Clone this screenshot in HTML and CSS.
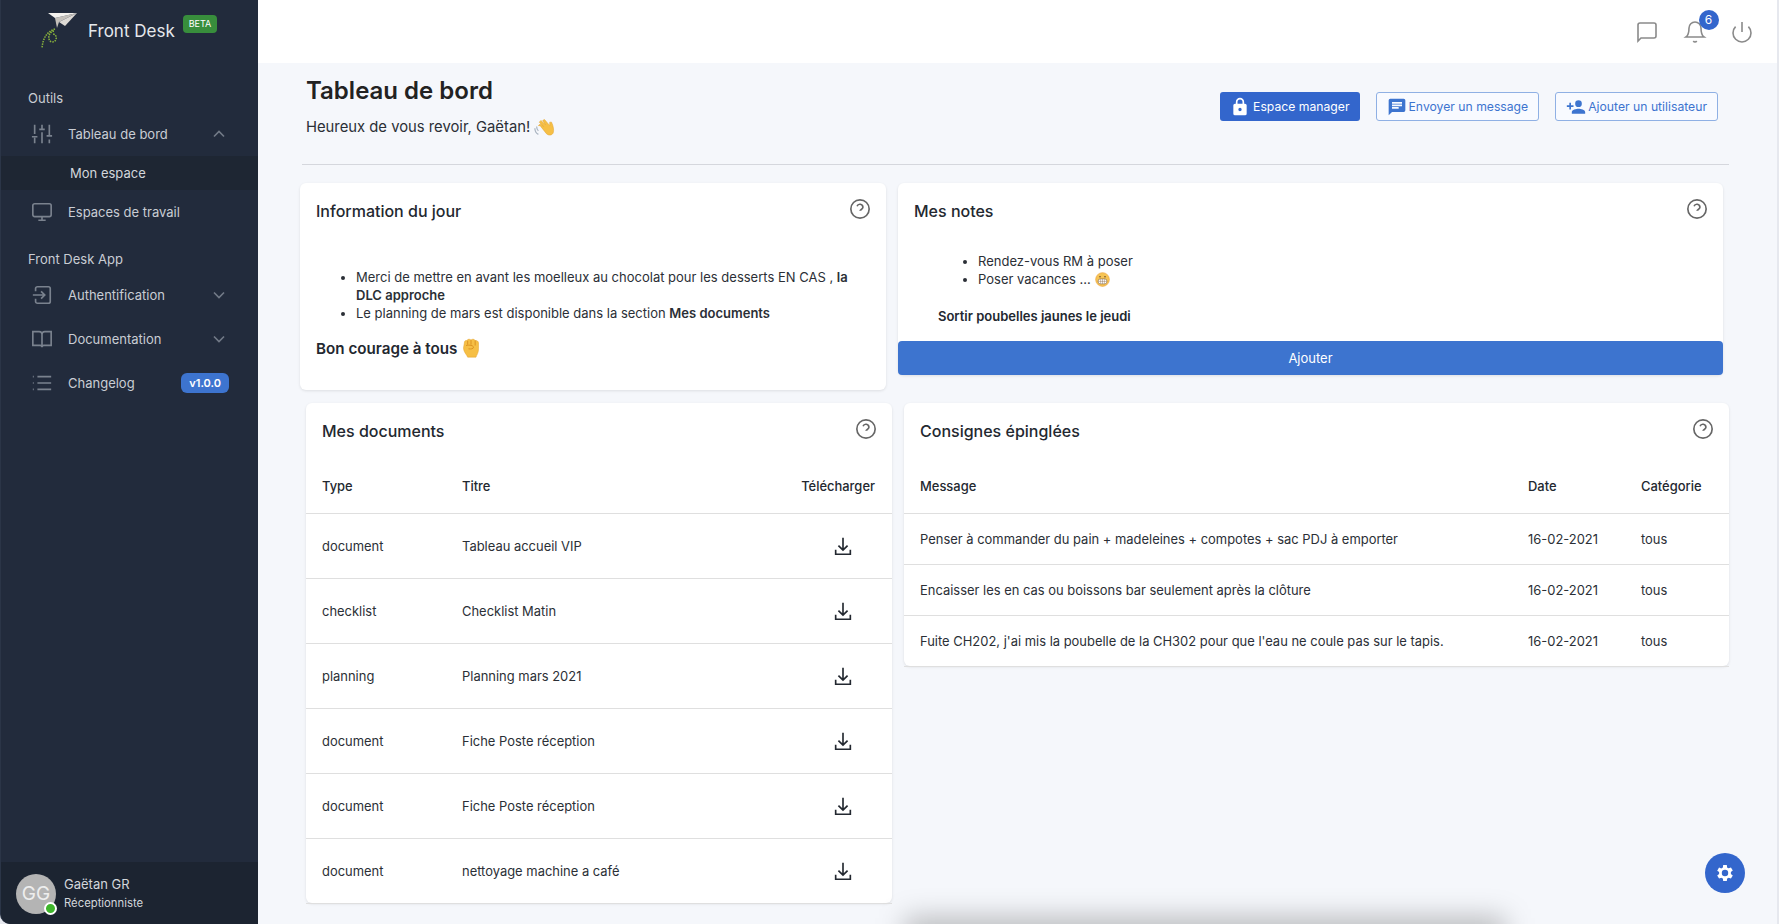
FILE: index.html
```html
<!DOCTYPE html>
<html lang="fr">
<head>
    <meta charset="UTF-8">
    <meta name="viewport" content="width=device-width, initial-scale=1.0">
    <title>Front Desk</title>
    <link rel="stylesheet" href="styles.css">
</head>
<body>
    <div class="app">
        <aside class="sidebar">
            <div class="brand">
                <svg class="brand-logo" viewBox="0 0 48 48" width="48" height="48">
                    <path d="M21 24C14 26 9 32 8 43M20 26C14 27 13 36 18 37C23 37 24 30 19 29" fill="none" stroke="#8ab43c" stroke-width="1.5" stroke-dasharray="1.5 1"/>
                    <path d="M21 13L43 8L25 17L23 23Z" fill="#c4c0ba"/>
                    <path d="M43 8L31 21L25 17Z" fill="#dedad5"/>
                    <path d="M14 8L43 8L21 13Z" fill="#f4f2ee"/>
                </svg>
                <span class="brand-name">Front Desk</span>
                <span class="brand-beta">BETA</span>
            </div>

            <nav class="menu">
                <div class="menu-title">Outils</div>
                <a class="menu-item">
                    <svg class="menu-icon" viewBox="0 0 24 24"><path d="M4 2v10M4 16v6M12 2v4M12 10v12M20 2v12M20 18v4M1 15h6M9 7h6M17 14h6"/></svg>
                    <span class="menu-label">Tableau de bord</span>
                    <svg class="menu-chevron" viewBox="0 0 24 24"><path d="M6 15l6-6 6 6"/></svg>
                </a>
                <a class="menu-sub">Mon espace</a>
                <a class="menu-item">
                    <svg class="menu-icon" viewBox="0 0 24 24"><rect x="2" y="3" width="20" height="14" rx="2"/><path d="M8 21h8M12 17v4"/></svg>
                    <span class="menu-label">Espaces de travail</span>
                </a>
                <div class="menu-title menu-title-next">Front Desk App</div>
                <a class="menu-item">
                    <svg class="menu-icon" viewBox="0 0 24 24"><path d="M5 8V5a2 2 0 0 1 2-2h12a2 2 0 0 1 2 2v14a2 2 0 0 1-2 2H7a2 2 0 0 1-2-2v-3M2 12h13M11 8l4 4-4 4"/></svg>
                    <span class="menu-label">Authentification</span>
                    <svg class="menu-chevron" viewBox="0 0 24 24"><path d="M6 9l6 6 6-6"/></svg>
                </a>
                <a class="menu-item">
                    <svg class="menu-icon" viewBox="0 0 24 24"><path d="M2 4h7a3 3 0 0 1 3 3v14a2 2 0 0 0-2-2H2zM22 4h-7a3 3 0 0 0-3 3v14a2 2 0 0 1 2-2h8z"/></svg>
                    <span class="menu-label">Documentation</span>
                    <svg class="menu-chevron" viewBox="0 0 24 24"><path d="M6 9l6 6 6-6"/></svg>
                </a>
                <a class="menu-item">
                    <svg class="menu-icon" viewBox="0 0 24 24"><path d="M7 5h15M7 12h15M7 19h15M2 5h1M2 12h1M2 19h1"/></svg>
                    <span class="menu-label">Changelog</span>
                    <span class="menu-badge">v1.0.0</span>
                </a>
            </nav>

            <div class="user">
                <div class="avatar">GG<span class="avatar-status"></span></div>
                <div class="user-text">
                    <div class="user-name">Gaëtan GR</div>
                    <div class="user-role">Réceptionniste</div>
                </div>
            </div>
        </aside>

        <div class="main">
            <header class="topbar">
                <svg class="top-icon" viewBox="0 0 24 24"><path d="M3 21V5a2 2 0 0 1 2-2h14a2 2 0 0 1 2 2v11a2 2 0 0 1-2 2H6z"/></svg>
                <span class="bell">
                    <svg class="top-icon" viewBox="0 0 24 24"><path d="M18 8a6 6 0 0 0-12 0c0 7-3 9-3 9h18s-3-2-3-9M13.7 21a2 2 0 0 1-3.4 0"/></svg>
                    <span class="bell-count">6</span>
                </span>
                <svg class="top-icon" viewBox="0 0 24 24"><path d="M18.4 6.6a9 9 0 1 1-12.8 0M12 2v10"/></svg>
            </header>

            <main class="content">
                <div class="page-head">
                    <div>
                        <h1 class="page-title">Tableau de bord</h1>
                        <p class="page-sub">Heureux de vous revoir, Gaëtan!
                            <svg class="emoji-wave" viewBox="0 0 24 24"><path d="M7 11l7 9c3 3 7 2 8-1 1-3 0-8-2-12l-2 0 0 4-6-7-2 1 3 5-5-5-2 2 5 5-4-3-2 2z" fill="#f6bf45" stroke="#e3a32e" stroke-width=".6"/><path d="M1 14c0 3 2 6 4 7M3 12c0 2 1 4 2 5" fill="none" stroke="#a9b4c0" stroke-width="1.4"/></svg>
                        </p>
                    </div>
                    <div class="page-actions">
                        <a class="btn btn-solid">
                            <svg viewBox="0 0 24 24"><path d="M18 8h-1V6a5 5 0 0 0-10 0v2H6a2 2 0 0 0-2 2v10a2 2 0 0 0 2 2h12a2 2 0 0 0 2-2V10a2 2 0 0 0-2-2zm-6 9a2 2 0 1 1 0-4 2 2 0 0 1 0 4zm3-9H9V6a3 3 0 0 1 6 0z"/></svg>
                            Espace manager
                        </a>
                        <a class="btn btn-line">
                            <svg viewBox="0 0 24 24"><path d="M20 2H4a2 2 0 0 0-2 2v18l4-4h14a2 2 0 0 0 2-2V4a2 2 0 0 0-2-2zM6 9h12v2H6zm8 5H6v-2h8zm4-6H6V6h12z"/></svg>
                            Envoyer un message
                        </a>
                        <a class="btn btn-line">
                            <svg viewBox="0 0 24 24"><path d="M15 12a4 4 0 1 0 0-8 4 4 0 0 0 0 8zm-9-2V7H4v3H1v2h3v3h2v-3h3v-2zm9 4c-2.7 0-8 1.3-8 4v2h16v-2c0-2.7-5.3-4-8-4z"/></svg>
                            Ajouter un utilisateur
                        </a>
                    </div>
                </div>
                <hr class="divider">

                <div class="row row-top">
                    <section class="card card-info">
                        <div class="card-head">
                            <h2>Information du jour</h2>
                            <svg class="help" viewBox="0 0 24 24"><circle cx="12" cy="12" r="10"/><path d="M8.8 9a3.3 3.3 0 0 1 6.4 1c0 2.2-3.200 3-3.200 4M12 17.500h.01"/></svg>
                        </div>
                        <ul class="info-list">
                            <li>Merci de mettre en avant les moelleux au chocolat pour les desserts EN CAS , <b>la DLC approche</b></li>
                            <li>Le planning de mars est disponible dans la section <b>Mes documents</b></li>
                        </ul>
                        <p class="info-foot">Bon courage à tous
                            <svg class="emoji-fist" viewBox="0 0 24 24"><path d="M4 6C4 3 6 3 7 3C8 1 11 1 12 2.500C13 1 16 1 17 3C19 2.500 21 4 21 6L21 13C21 18 19 20 18 23L8 23C7 20 3 17 3 12Z" fill="#f6bf45" stroke="#e3a32e" stroke-width=".6"/><path d="M8 3.500V8M12 2.500V8M17 3V9M6 9C10 8 15 9 15 11C15 13 12 13.500 9 13" fill="none" stroke="#d98f20" stroke-width="1.100"/></svg>
                        </p>
                    </section>
                    <section class="card card-notes">
                        <div class="card-head">
                            <h2>Mes notes</h2>
                            <svg class="help" viewBox="0 0 24 24"><circle cx="12" cy="12" r="10"/><path d="M8.8 9a3.3 3.3 0 0 1 6.4 1c0 2.2-3.200 3-3.200 4M12 17.500h.01"/></svg>
                        </div>
                        <ul class="notes-list">
                            <li>Rendez-vous RM à poser</li>
                            <li>Poser vacances ...
                                <svg class="emoji-grin" viewBox="0 0 24 24"><circle cx="12" cy="12" r="11" fill="#f6c454" stroke="#eda23a" stroke-width="1"/><rect x="5" y="11" width="14" height="8" rx="3.500" fill="#fff" stroke="#8a6a4a" stroke-width="1"/><path d="M5 15h14M9 11v8M12 11v8M15 11v8" stroke="#8a6a4a" stroke-width=".7"/><circle cx="8" cy="7.500" r="1.300" fill="#6b4a2a"/><circle cx="16" cy="7.500" r="1.300" fill="#6b4a2a"/></svg>
                            </li>
                        </ul>
                        <p class="notes-foot">Sortir poubelles jaunes le jeudi</p>
                        <a class="add-btn">Ajouter</a>
                    </section>
                </div>

                <div class="row">
                    <section class="card card-docs">
                        <div class="card-head card-head-table">
                            <h2>Mes documents</h2>
                            <svg class="help" viewBox="0 0 24 24"><circle cx="12" cy="12" r="10"/><path d="M8.8 9a3.3 3.3 0 0 1 6.4 1c0 2.2-3.200 3-3.200 4M12 17.500h.01"/></svg>
                        </div>
                        <table class="table table-docs">
                            <thead>
                                <tr><th class="col-type">Type</th><th>Titre</th><th class="col-dl">Télécharger</th></tr>
                            </thead>
                            <tbody>
                                <tr><td>document</td><td>Tableau accueil VIP</td><td class="col-dl"><svg class="dl" viewBox="0 0 24 24"><path d="M12 3v13M7 11.500l5 5 5-5M4 16v5h16v-5"/></svg></td></tr>
                                <tr><td>checklist</td><td>Checklist Matin</td><td class="col-dl"><svg class="dl" viewBox="0 0 24 24"><path d="M12 3v13M7 11.500l5 5 5-5M4 16v5h16v-5"/></svg></td></tr>
                                <tr><td>planning</td><td>Planning mars 2021</td><td class="col-dl"><svg class="dl" viewBox="0 0 24 24"><path d="M12 3v13M7 11.500l5 5 5-5M4 16v5h16v-5"/></svg></td></tr>
                                <tr><td>document</td><td>Fiche Poste réception</td><td class="col-dl"><svg class="dl" viewBox="0 0 24 24"><path d="M12 3v13M7 11.500l5 5 5-5M4 16v5h16v-5"/></svg></td></tr>
                                <tr><td>document</td><td>Fiche Poste réception</td><td class="col-dl"><svg class="dl" viewBox="0 0 24 24"><path d="M12 3v13M7 11.500l5 5 5-5M4 16v5h16v-5"/></svg></td></tr>
                                <tr><td>document</td><td>nettoyage machine a café</td><td class="col-dl"><svg class="dl" viewBox="0 0 24 24"><path d="M12 3v13M7 11.500l5 5 5-5M4 16v5h16v-5"/></svg></td></tr>
                            </tbody>
                        </table>
                    </section>
                    <section class="card card-pins">
                        <div class="card-head card-head-table">
                            <h2>Consignes épinglées</h2>
                            <svg class="help" viewBox="0 0 24 24"><circle cx="12" cy="12" r="10"/><path d="M8.8 9a3.3 3.3 0 0 1 6.4 1c0 2.2-3.200 3-3.200 4M12 17.500h.01"/></svg>
                        </div>
                        <table class="table table-pins">
                            <thead>
                                <tr><th>Message</th><th class="col-date">Date</th><th class="col-cat">Catégorie</th></tr>
                            </thead>
                            <tbody>
                                <tr><td>Penser à commander du pain + madeleines + compotes + sac PDJ à emporter</td><td>16-02-2021</td><td>tous</td></tr>
                                <tr><td>Encaisser les en cas ou boissons bar seulement après la clôture</td><td>16-02-2021</td><td>tous</td></tr>
                                <tr><td>Fuite CH202, j'ai mis la poubelle de la CH302 pour que l'eau ne coule pas sur le tapis.</td><td>16-02-2021</td><td>tous</td></tr>
                            </tbody>
                        </table>
                    </section>
                </div>
            </main>
        </div>
    </div>

    <div class="dock-shadow"></div>
    <a class="fab">
        <svg viewBox="0 0 24 24"><path d="M18.4 13a7.500 7.500 0 0 0 0-2l2.100-1.600-2-3.500-2.500 1a7.500 7.500 0 0 0-1.700-1L14 3.300h-4L9.700 6A7.500 7.500 0 0 0 8 7L5.500 6l-2 3.500L5.600 11a7.500 7.500 0 0 0 0 2l-2.100 1.600 2 3.500 2.500-1a7.500 7.500 0 0 0 1.700 1l.3 2.600h4l.3-2.600a7.500 7.500 0 0 0 1.700-1l2.500 1 2-3.500zM12 15.500a3.500 3.500 0 1 1 0-7 3.500 3.500 0 0 1 0 7z"/></svg>
    </a>
</body>
</html>
```

FILE: styles.css
```css
* { box-sizing: border-box; }
html, body { height: 100%; }
body { margin: 0; font-family: Inter, "Noto Sans", sans-serif; font-size: 13px; color: #232830; background: #5a4a40; overflow: hidden; }
a { text-decoration: none; }

.app { display: flex; height: 924px; padding-right: 2px; background: #e6e8ee; }

/* sidebar */
.sidebar { width: 258px; flex: none; display: flex; flex-direction: column; background: #222b3c; color: #c9cdd4; border-left: 1px solid #2b3547; border-bottom-left-radius: 10px; overflow: hidden; }
.brand { height: 63px; display: flex; align-items: flex-start; padding: 5px 0 0 33px; }
.brand-logo { width: 48px; height: 48px; flex: none; }
.brand-name { font-size: 17px; color: #e6e8ec; margin: 16px 0 0 6px; }
.brand-beta { margin: 10px 0 0 8px; height: 18px; padding: 0 6px; border-radius: 4px; background: #388e3c; color: #fff; font-size: 9px; line-height: 18px; }

.menu { flex: 1; padding-top: 25px; }
.menu-title { padding-left: 27px; height: 20px; line-height: 20px; font-size: 13px; color: #c9cdd4; margin-bottom: 4px; }
.menu-title-next { margin-top: 15px; }
.menu-item { display: flex; align-items: center; height: 44px; padding: 0 24px 0 30px; color: #c9cdd4; font-size: 13px; }
.menu-icon { width: 22px; height: 22px; flex: none; fill: none; stroke: #7a828e; stroke-width: 1.8; }
.menu-label { flex: 1; margin-left: 15px; }
.menu-chevron { width: 20px; height: 20px; margin-right: 5px; fill: none; stroke: #727a87; stroke-width: 2; }
.menu-sub { display: block; height: 34px; line-height: 34px; padding-left: 69px; background: #1e2633; color: #d3d6db; font-size: 13px; }
.menu-badge { margin-right: 5px; height: 20px; padding: 0 8px; border-radius: 6px; background: #3d74cf; color: #fff; font-size: 11px; font-weight: 600; line-height: 20px; }

.user { height: 62px; display: flex; align-items: center; padding-left: 15px; background: #1c2431; }
.avatar { position: relative; width: 40px; height: 40px; margin-top: 2px; border-radius: 50%; background: #b4b4b4; color: #eee; font-size: 19px; line-height: 40px; text-align: center; }
.avatar-status { position: absolute; right: -1px; bottom: -1px; width: 13px; height: 13px; border-radius: 50%; background: #3fb62c; border: 2px solid #fff; }
.user-text { margin-left: 8px; }
.user-name { font-size: 13px; color: #d3d6db; }
.user-role { margin-top: 4px; font-size: 11.300px; color: #d3d6db; }

/* main column */
.main { flex: 1; display: flex; flex-direction: column; background: #f5f7fb; }
.topbar { height: 63px; flex: none; display: flex; align-items: center; justify-content: flex-end; gap: 23.500px; padding: 0 23px 0 0; background: #fff; }
.top-icon { width: 24px; height: 24px; display: block; fill: none; stroke: #8a8a8a; stroke-width: 1.6; }
.bell { position: relative; }
.bell-count { position: absolute; top: -10px; right: -12px; width: 20px; height: 20px; border-radius: 50%; background: #3366cc; color: #fff; font-size: 12px; line-height: 20px; text-align: center; }

.content { padding: 0 48px; }
.page-head { display: flex; justify-content: space-between; height: 101px; }
.page-title { margin: 13px 0 0; font-size: 24px; line-height: 30px; font-weight: 600; color: #222; }
.page-sub { margin: 9px 0 0; font-size: 14.800px; line-height: 24px; color: #2b2f36; }
.emoji-wave { width: 21px; height: 21px; vertical-align: -5px; }
.page-actions { display: flex; gap: 16px; padding: 29px 11px 0 0; align-items: flex-start; }
.btn { display: flex; align-items: center; height: 29px; border-radius: 3px; font-size: 12.200px; white-space: nowrap; }
.btn svg { width: 20px; height: 20px; fill: currentColor; }
.btn-solid { gap: 3px; padding: 0 10px; background: #3366cc; color: #fff; }
.btn-line { gap: 2px; padding: 0 10px; background: #f8faff; color: #3d74cf; border: 1px solid #8fb0e4; }
.divider { margin: 0 0 18px -4px; border: 0; border-top: 1px solid #d5d7dd; }

.row { display: flex; align-items: flex-start; gap: 12px; margin-bottom: 13px; }
.row-top { margin-left: -6px; margin-right: 6px; }
.card { background: #fff; border-radius: 6px; box-shadow: 0 1px 3px rgba(0,0,0,.1); }
.card-info { width: 586px; height: 207px; flex: none; }
.card-notes { flex: 1; height: 192px; display: flex; flex-direction: column; }
.card-docs { width: 586px; height: 500px; flex: none; }
.card-pins { flex: 1; height: 263px; }

.card-head { display: flex; justify-content: space-between; padding: 15px 15px 0 16px; height: 50px; }
.card-head h2 { margin: 2px 0 0; font-size: 16px; line-height: 22px; font-weight: 500; color: #232830; }
.card-head-table { height: 63px; }
.help { width: 22px; height: 22px; fill: none; stroke: #666; stroke-width: 1.8; }

.info-list { margin: 35px 0 0; padding: 0 30px 0 56px; font-size: 13px; line-height: 18px; color: #2b2f36; }
.info-list b, .notes-foot { font-weight: 600; }
.info-foot { margin: 16px 0 0 16px; font-size: 15.200px; font-weight: 600; line-height: 22px; color: #232830; }
.emoji-fist { width: 20px; height: 20px; vertical-align: -4px; }
.notes-list { margin: 19px 0 0; padding: 0 30px 0 80px; font-size: 13px; line-height: 18px; color: #2b2f36; }
.emoji-grin { width: 15px; height: 15px; vertical-align: -3px; }
.notes-foot { margin: 19px 0 0 40px; font-size: 13px; line-height: 18px; color: #232830; }
.add-btn { display: block; margin-top: auto; height: 34px; line-height: 34px; border-radius: 4px; background: #3d74cf; color: #fff; font-size: 13px; text-align: center; }

/* tables */
.table { width: 100%; border-collapse: collapse; table-layout: fixed; font-size: 12.950px; color: #2b2f36; }
.table th { height: 47px; text-align: left; font-weight: 500; padding: 0 0 6px 16px; border-bottom: 1px solid #dfdfdf; color: #232830; }
.table td { padding: 0 0 0 16px; border-bottom: 1px solid #dfdfdf; }
.table-docs td { height: 65px; }
.table-pins td { height: 51px; }
.col-type { width: 140px; }
.table .col-dl { width: 110px; text-align: right; padding: 0 17px 6px 0; }
.table td.col-dl { padding-bottom: 0; }
.col-date { width: 113px; }
.col-cat { width: 104px; }
.table-docs .col-dl .dl { width: 22px; height: 22px; margin-right: 21px; vertical-align: middle; fill: none; stroke: #232830; stroke-width: 1.8; }

.fab { position: fixed; left: 1705px; top: 853px; width: 40px; height: 40px; border-radius: 50%; background: #3366cc; display: flex; align-items: center; justify-content: center; }
.fab svg { width: 22px; height: 22px; fill: #fff; }
.dock-shadow { position: fixed; left: 905px; top: 918px; width: 600px; height: 30px; background: rgba(0,0,0,.26); filter: blur(14px); }
```
